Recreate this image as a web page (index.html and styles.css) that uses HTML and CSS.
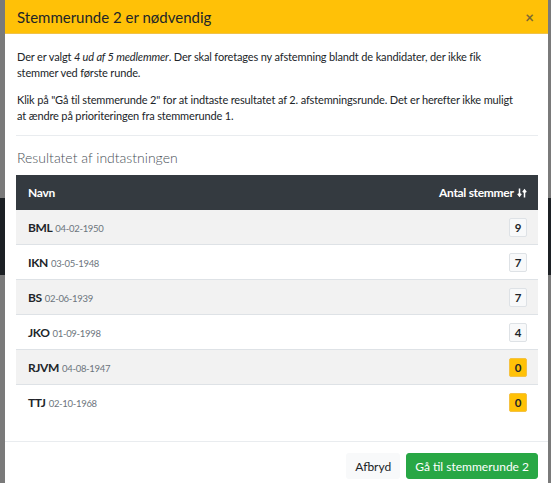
FILE: index.html
```html
<!DOCTYPE html>
<html lang="da">
<head>
    <meta charset="UTF-8">
    <meta name="viewport" content="width=device-width, initial-scale=1.0">
    <title>Stemmerunde 2 er nødvendig</title>
    <link rel="stylesheet" href="styles.css">
</head>
<body>
    <div class="backdrop">
        <div class="modal">
            <!-- Header -->
            <div class="modal-header">
                <h5 class="modal-title">Stemmerunde 2 er nødvendig</h5>
                <span class="close">&times;</span>
            </div>

            <!-- Body -->
            <div class="modal-body">
                <p>Der er valgt <em>4 ud af 5 medlemmer</em>. Der skal foretages ny afstemning blandt de kandidater, der ikke fik stemmer ved første runde.</p>
                <p>Klik på "Gå til stemmerunde 2" for at indtaste resultatet af 2. afstemningsrunde. Det er herefter ikke muligt at ændre på prioriteringen fra stemmerunde 1.</p>
                <hr>
                <h6 class="section-title">Resultatet af indtastningen</h6>

                <table class="result-table">
                    <thead>
                        <tr>
                            <th>Navn</th>
                            <th class="num">Antal stemmer
                                <svg class="sort-icon" width="10" height="10" viewBox="0 0 10 10">
                                    <path d="M2.5 0.5v7M0.8 5.8l1.7 2.2 1.7-2.2" stroke="#fff" stroke-width="1.5" fill="none"/>
                                    <path d="M7.5 9.5v-7M5.8 4.2l1.7-2.2 1.7 2.2" stroke="#fff" stroke-width="1.5" fill="none"/>
                                </svg>
                            </th>
                        </tr>
                    </thead>
                    <tbody>
                        <tr>
                            <td><b>BML</b> <small>04-02-1950</small></td>
                            <td class="num"><span class="badge">9</span></td>
                        </tr>
                        <tr>
                            <td><b>IKN</b> <small>03-05-1948</small></td>
                            <td class="num"><span class="badge">7</span></td>
                        </tr>
                        <tr>
                            <td><b>BS</b> <small>02-06-1939</small></td>
                            <td class="num"><span class="badge">7</span></td>
                        </tr>
                        <tr>
                            <td><b>JKO</b> <small>01-09-1998</small></td>
                            <td class="num"><span class="badge">4</span></td>
                        </tr>
                        <tr>
                            <td><b>RJVM</b> <small>04-08-1947</small></td>
                            <td class="num"><span class="badge badge-warning">0</span></td>
                        </tr>
                        <tr>
                            <td><b>TTJ</b> <small>02-10-1968</small></td>
                            <td class="num"><span class="badge badge-warning">0</span></td>
                        </tr>
                    </tbody>
                </table>
            </div>

            <!-- Footer -->
            <div class="modal-footer">
                <button class="btn btn-light">Afbryd</button>
                <button class="btn btn-success">Gå til stemmerunde 2</button>
            </div>
        </div>
    </div>
</body>
</html>
```

FILE: styles.css
```css
body {
    margin: 0;
    padding: 0;
    font-family: Lato, "Noto Sans", Arial, sans-serif;
    color: #212529;
    overflow: hidden;
}

/* Dimmed page behind the dialog */
.backdrop {
    height: 483px;
    background: linear-gradient(to bottom, #7a7a7a 0, #7a7a7a 198px, #1c2024 198px, #1c2024 275px, #7a7a7a 275px);
    padding: 0 3px 0 5px;
}

.modal {
    background: #fff;
    height: 100%;
    display: flex;
    flex-direction: column;
}

/* Header */
.modal-header {
    background-color: #ffc107;
    height: 34px;
    padding: 0 12px;
    display: flex;
    align-items: center;
    justify-content: space-between;
    border-bottom: 1px solid #f0c24a;
    box-sizing: border-box;
}

.modal-title {
    margin: 0;
    font-size: 15px;
    font-weight: 400;
    color: #212529;
}

.close {
    font-size: 15px;
    color: #7d6a33;
    font-weight: 700;
    margin-right: 2px;
}

/* Body */
.modal-body {
    padding: 15px 10px 22px 11px;
    flex: none;
}

.modal-body p {
    margin: 0 0 11px;
    font-size: 11px;
    line-height: 16px;
    padding: 0 20px 0 1px;
    letter-spacing: -0.15px;
}

hr {
    border: none;
    border-top: 1px solid #e9ecef;
    margin: 0 0 13px;
}

.section-title {
    margin: 0 0 9px;
    font-size: 14px;
    font-weight: 300;
    color: #495057;
    padding-left: 1px;
}

.result-table {
    width: 100%;
    border-collapse: collapse;
    font-size: 12px;
}

.result-table th {
    background: #343a40;
    color: #fff;
    height: 35px;
    padding: 0 12px;
    text-align: left;
    font-weight: 700;
    font-size: 12px;
    letter-spacing: -0.3px;
}

.result-table td {
    height: 34px;
    padding: 0 12px;
    border-bottom: 1px solid #dee2e6;
}

.result-table tbody tr:nth-child(odd) td {
    background: #f2f2f2;
}

.result-table tbody tr:last-child td {
    border-bottom: none;
}

.result-table td b {
    font-size: 12px;
    letter-spacing: -0.4px;
}

.result-table td small {
    font-size: 9.5px;
    color: #6c757d;
    letter-spacing: -0.3px;
}

.result-table .num {
    text-align: right;
    width: 150px;
    padding-right: 11px;
}

.sort-icon {
    vertical-align: -1px;
    margin-left: 1px;
}

.badge {
    display: inline-block;
    min-width: 8px;
    padding: 2px 4px;
    font-size: 11.5px;
    font-weight: 700;
    line-height: 13px;
    text-align: center;
    background: #f8f9fa;
    border: 1px solid #dee2e6;
    border-radius: 2px;
}

.badge-warning {
    background: #ffc107;
    border-color: #f5c242;
}

/* Footer */
.modal-footer {
    border-top: 1px solid #e9ecef;
    padding: 11px 10px 0 0;
    display: flex;
    justify-content: flex-end;
    gap: 6px;
}

.btn {
    font-family: inherit;
    font-size: 12px;
    height: 26px;
    padding: 0 8px;
    border-radius: 3px;
    border: 1px solid transparent;
    cursor: pointer;
}

.btn-light {
    background: #f8f9fa;
    color: #212529;
}

.btn-success {
    background: #28a745;
    border-color: #28a745;
    color: #fff;
}
```
